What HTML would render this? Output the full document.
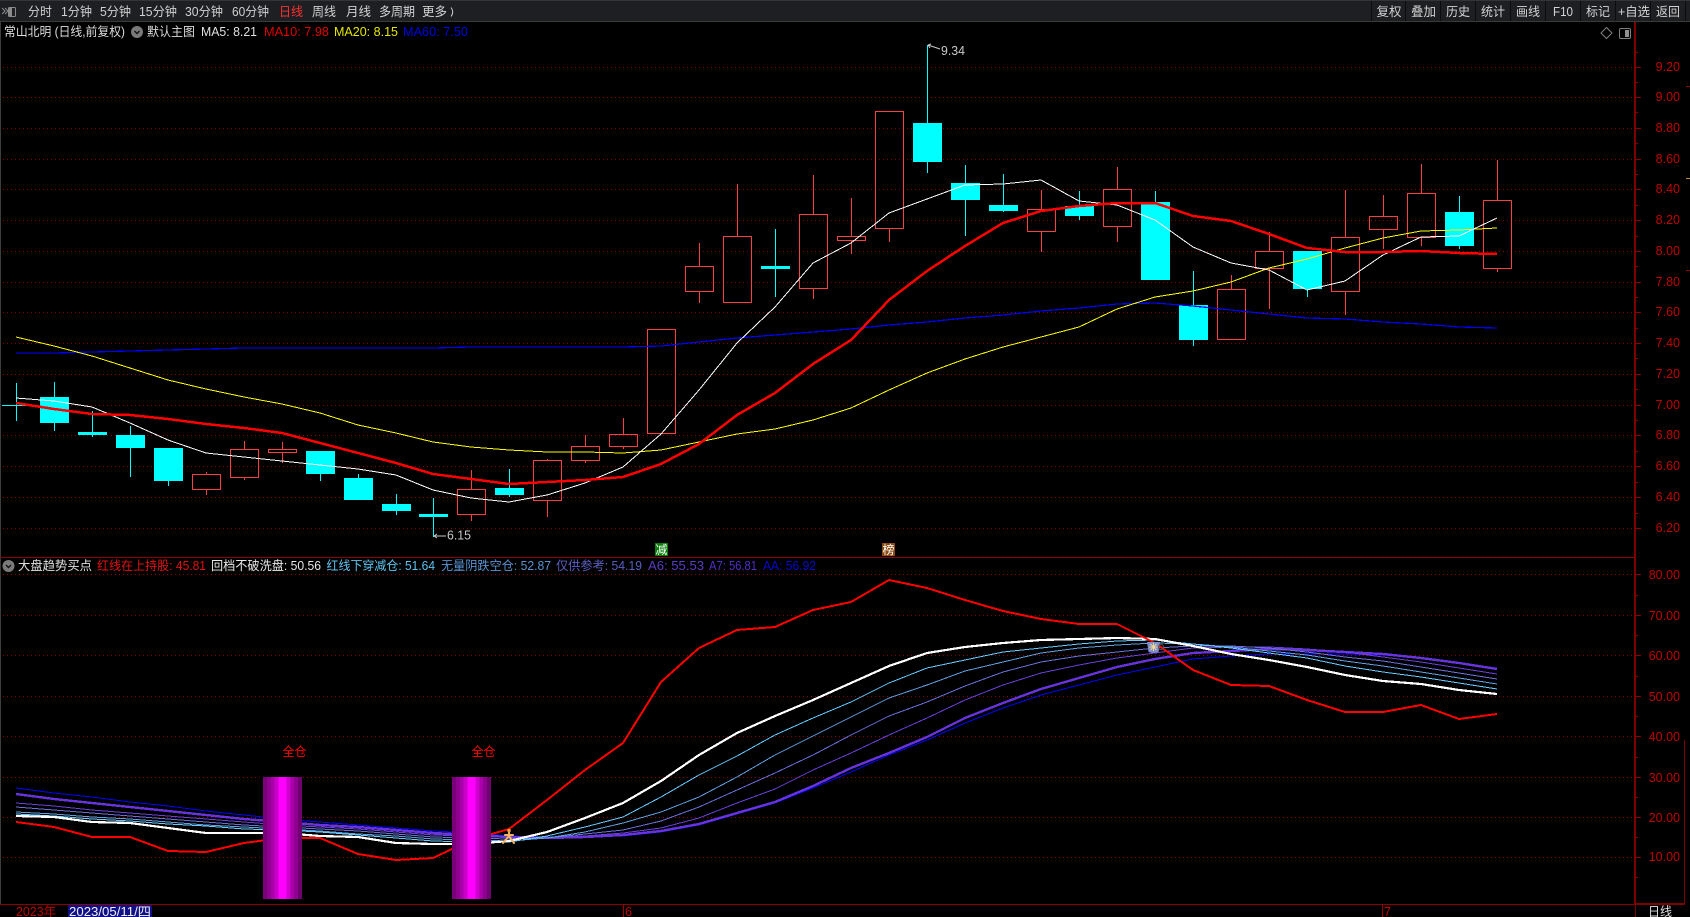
<!DOCTYPE html>
<html lang="zh-CN">
<head>
<meta charset="utf-8">
<title>常山北明</title>
<style>
html,body{margin:0;padding:0;background:#000;width:1690px;height:917px;overflow:hidden}
svg{display:block;position:absolute;left:0;top:0}
text{font-family:"Liberation Sans","Noto Sans CJK SC",sans-serif;font-size:12.5px}
.c{shape-rendering:crispEdges}
.l{fill:none;shape-rendering:crispEdges;stroke-linejoin:round}
.tb{fill:#d2d2d2;font-size:12.5px}
.ax{fill:#c00000;font-size:12.5px;text-anchor:end}
</style>
</head>
<body>
<svg width="1690" height="917" viewBox="0 0 1690 917" xmlns="http://www.w3.org/2000/svg">
<defs>
<linearGradient id="bar" x1="0" x2="1" y1="0" y2="0">
<stop offset="0" stop-color="#7a007a"/><stop offset=".1" stop-color="#7a007a"/>
<stop offset=".1" stop-color="#900090"/><stop offset=".2" stop-color="#900090"/>
<stop offset=".2" stop-color="#aa00aa"/><stop offset=".3" stop-color="#aa00aa"/>
<stop offset=".3" stop-color="#c800c8"/><stop offset=".4" stop-color="#c800c8"/>
<stop offset=".4" stop-color="#ff00ff"/><stop offset=".6" stop-color="#ff00ff"/>
<stop offset=".6" stop-color="#d000d0"/><stop offset=".7" stop-color="#d000d0"/>
<stop offset=".7" stop-color="#aa00aa"/><stop offset=".8" stop-color="#aa00aa"/>
<stop offset=".8" stop-color="#900090"/><stop offset=".9" stop-color="#900090"/>
<stop offset=".9" stop-color="#700070"/><stop offset="1" stop-color="#700070"/>
</linearGradient>
</defs>
<rect width="1690" height="917" fill="#000"/>

<!-- toolbar -->
<rect x="0" y="0" width="1690" height="21" fill="#1e1f23"/>
<rect x="0" y="0" width="1690" height="1" fill="#33343a"/>
<rect x="0" y="21" width="1690" height="1" fill="#3a3a3a"/>
<path class="c" d="M1371.5 1V21M1405.5 1V21M1440.5 1V21M1475.5 1V21M1510.5 1V21M1545.5 1V21M1580.5 1V21M1615.5 1V21M1650.5 1V21M1685.5 1V21" stroke="#0c0c0c" fill="none"/>
<g fill="none" stroke="#8a8a8a" stroke-width="1">
<path d="M2 8l3 3-3 3M5 8l3 3-3 3"/>
<rect x="8.5" y="7.5" width="7" height="9" rx="1"/>
</g>
<rect x="9" y="8" width="3" height="8" fill="#8a8a8a"/>
<text class="tb" x="28" y="16" textLength="24" lengthAdjust="spacingAndGlyphs">分时</text>
<text class="tb" x="61" y="16" textLength="31" lengthAdjust="spacingAndGlyphs">1分钟</text>
<text class="tb" x="100" y="16" textLength="31" lengthAdjust="spacingAndGlyphs">5分钟</text>
<text class="tb" x="139" y="16" textLength="38" lengthAdjust="spacingAndGlyphs">15分钟</text>
<text class="tb" x="185" y="16" textLength="38" lengthAdjust="spacingAndGlyphs">30分钟</text>
<text class="tb" x="232" y="16" textLength="37" lengthAdjust="spacingAndGlyphs">60分钟</text>
<text x="279" y="16" fill="#ff3030" textLength="24" lengthAdjust="spacingAndGlyphs">日线</text>
<text class="tb" x="312" y="16" textLength="24" lengthAdjust="spacingAndGlyphs">周线</text>
<text class="tb" x="346" y="16" textLength="25" lengthAdjust="spacingAndGlyphs">月线</text>
<text class="tb" x="379" y="16" textLength="36" lengthAdjust="spacingAndGlyphs">多周期</text>
<text class="tb" x="422" y="16" textLength="25" lengthAdjust="spacingAndGlyphs">更多</text>
<path d="M451 7.5q3.5 4.5 0 9" fill="none" stroke="#d2d2d2" stroke-width="1"/>

<text class="tb" x="1376.5" y="16" textLength="25" lengthAdjust="spacingAndGlyphs">复权</text>
<text class="tb" x="1411" y="16" textLength="25" lengthAdjust="spacingAndGlyphs">叠加</text>
<text class="tb" x="1446" y="16" textLength="24" lengthAdjust="spacingAndGlyphs">历史</text>
<text class="tb" x="1481" y="16" textLength="24" lengthAdjust="spacingAndGlyphs">统计</text>
<text class="tb" x="1516" y="16" textLength="24" lengthAdjust="spacingAndGlyphs">画线</text>
<text class="tb" x="1553" y="16" textLength="20" lengthAdjust="spacingAndGlyphs">F10</text>
<text class="tb" x="1586" y="16" textLength="24" lengthAdjust="spacingAndGlyphs">标记</text>
<text class="tb" x="1618" y="16" textLength="32" lengthAdjust="spacingAndGlyphs">+自选</text>
<text class="tb" x="1656" y="16" textLength="24" lengthAdjust="spacingAndGlyphs">返回</text>

<!-- title row -->
<text x="4" y="36" fill="#dcdcdc" textLength="121" lengthAdjust="spacingAndGlyphs">常山北明 (日线,前复权)</text>
<circle cx="137" cy="32" r="6" fill="#7a7a7a"/>
<path d="M134.5 31l2.5 2.5 2.5-2.5" fill="none" stroke="#111" stroke-width="1.4"/>
<text x="147" y="36" fill="#dcdcdc" textLength="48" lengthAdjust="spacingAndGlyphs">默认主图</text>
<text x="201" y="36" fill="#e0e0e0" textLength="56" lengthAdjust="spacingAndGlyphs">MA5: 8.21</text>
<text x="264" y="36" fill="#e00000" textLength="65" lengthAdjust="spacingAndGlyphs">MA10: 7.98</text>
<text x="334" y="36" fill="#e6e600" textLength="64" lengthAdjust="spacingAndGlyphs">MA20: 8.15</text>
<text x="403" y="36" fill="#0000e0" textLength="65" lengthAdjust="spacingAndGlyphs">MA60: 7.50</text>
<path d="M1606.5 27.5l5.5 5.5-5.5 5.5-5.5-5.5z" fill="none" stroke="#808080"/>
<rect x="1619.5" y="28.5" width="11" height="10" rx="1.5" fill="none" stroke="#808080"/>
<rect x="1625" y="30" width="4" height="7" fill="#909090"/>

<!-- grid -->
<g stroke="#8a0000" stroke-width="1" stroke-dasharray="1 3" class="c">
<path d="M3 67.5H1635M3 97.5H1635M3 128.5H1635M3 159.5H1635M3 189.5H1635M3 220.5H1635M3 251.5H1635M3 282.5H1635M3 312.5H1635M3 343.5H1635M3 374.5H1635M3 405.5H1635M3 435.5H1635M3 466.5H1635M3 497.5H1635M3 528.5H1635"/>
<path d="M3 574.5H1635M3 615.5H1635M3 655.5H1635M3 696.5H1635M3 736.5H1635M3 777.5H1635M3 817.5H1635M3 857.5H1635"/>
</g>

<!-- frame -->
<rect x="0" y="22" width="1" height="883" fill="#3c3c3c"/>
<rect x="0" y="557" width="1635" height="1" fill="#8b0000"/>
<rect x="0" y="904" width="1685" height="1" fill="#8b0000"/>
<rect x="1634" y="22" width="2" height="883" fill="#800000"/>
<rect x="1635" y="905" width="1" height="12" fill="#800000"/>
<rect x="1635" y="903" width="50" height="2" fill="#800000"/>
<rect x="1684" y="740" width="1" height="165" fill="#800000"/>
<rect x="623" y="905" width="1" height="12" fill="#a00000"/>
<rect x="1382" y="905" width="1" height="12" fill="#a00000"/>
<path class="c" stroke="#8b0000" fill="none" d="M1636 67.5h5M1636 82.5h2M1636 97.5h5M1636 112.5h2M1636 128.5h5M1636 143.5h2M1636 159.5h5M1636 174.5h2M1636 189.5h5M1636 205.5h2M1636 220.5h5M1636 236.5h2M1636 251.5h5M1636 266.5h2M1636 282.5h5M1636 297.5h2M1636 312.5h5M1636 328.5h2M1636 343.5h5M1636 358.5h2M1636 374.5h5M1636 389.5h2M1636 405.5h5M1636 420.5h2M1636 435.5h5M1636 451.5h2M1636 466.5h5M1636 482.5h2M1636 497.5h5M1636 513.5h2M1636 528.5h5M1636 574.5h5M1636 595.5h2M1636 615.5h5M1636 635.5h2M1636 655.5h5M1636 676.5h2M1636 696.5h5M1636 716.5h2M1636 736.5h5M1636 757.5h2M1636 777.5h5M1636 797.5h2M1636 817.5h5M1636 837.5h2M1636 857.5h5M1636 877.5h2M1636 52.5h2M1686 86.5h4M1686 270.5h4"/>
<rect x="1686" y="178" width="4" height="1" fill="#c09040"/>
<g>
<text class="ax" x="1680" y="71">9.20</text><text class="ax" x="1680" y="101">9.00</text>
<text class="ax" x="1680" y="132">8.80</text><text class="ax" x="1680" y="163">8.60</text>
<text class="ax" x="1680" y="193">8.40</text><text class="ax" x="1680" y="224">8.20</text>
<text class="ax" x="1680" y="255">8.00</text><text class="ax" x="1680" y="286">7.80</text>
<text class="ax" x="1680" y="316">7.60</text><text class="ax" x="1680" y="347">7.40</text>
<text class="ax" x="1680" y="378">7.20</text><text class="ax" x="1680" y="409">7.00</text>
<text class="ax" x="1680" y="439">6.80</text><text class="ax" x="1680" y="470">6.60</text>
<text class="ax" x="1680" y="501">6.40</text><text class="ax" x="1680" y="532">6.20</text>
<text class="ax" x="1680" y="579">80.00</text><text class="ax" x="1680" y="620">70.00</text>
<text class="ax" x="1680" y="660">60.00</text><text class="ax" x="1680" y="701">50.00</text>
<text class="ax" x="1680" y="741">40.00</text><text class="ax" x="1680" y="782">30.00</text>
<text class="ax" x="1680" y="822">20.00</text><text class="ax" x="1680" y="861">10.00</text>
</g>

<!-- red candles -->
<path class="c" fill="none" stroke="#f84040" stroke-width="1" d="
M206.5 472V474M206.5 490V495M192.5 474.5H220.5V489.5H192.5Z
M244.5 441V449M244.5 478V480M230.5 449.5H258.5V477.5H230.5Z
M282.5 442V449M282.5 453V463M268.5 449.5H296.5V452.5H268.5Z
M471.5 470V489M471.5 515V521M457.5 489.5H485.5V514.5H457.5Z
M547.5 459V460M547.5 501V517M533.5 460.5H561.5V500.5H533.5Z
M585.5 435V446M585.5 461V463M571.5 446.5H599.5V460.5H571.5Z
M623.5 418V434M623.5 447V449M609.5 434.5H637.5V446.5H609.5Z
M647.5 329.5H675.5V433.5H647.5Z
M699.5 243V266M699.5 292V303M685.5 266.5H713.5V291.5H685.5Z
M737.5 184V236M723.5 236.5H751.5V302.5H723.5Z
M813.5 175V214M813.5 289V299M799.5 214.5H827.5V288.5H799.5Z
M851.5 198V236M851.5 241V254M837.5 236.5H865.5V240.5H837.5Z
M889.5 229V242M875.5 111.5H903.5V228.5H875.5Z
M1041.5 190V209M1041.5 232V252M1027.5 209.5H1055.5V231.5H1027.5Z
M1117.5 167V189M1117.5 227V242M1103.5 189.5H1131.5V226.5H1103.5Z
M1231.5 275V289M1217.5 289.5H1245.5V339.5H1217.5Z
M1269.5 232V251M1269.5 269V309M1255.5 251.5H1283.5V268.5H1255.5Z
M1345.5 190V237M1345.5 292V315M1331.5 237.5H1359.5V291.5H1331.5Z
M1383.5 195V216M1383.5 230V249M1369.5 216.5H1397.5V229.5H1369.5Z
M1421.5 164V193M1421.5 238V246M1407.5 193.5H1435.5V237.5H1407.5Z
M1497.5 160V200M1497.5 269V272M1483.5 200.5H1511.5V268.5H1483.5Z"/>

<!-- cyan candles -->
<path class="c" fill="none" stroke="#00ffff" stroke-width="1" d="M16.5 383V421M2 405.5H29M54.5 382V431M92.5 411V437M130.5 426V477M168.5 448V486M320.5 451V481M358.5 474V500M396.5 494V515M433.5 498V537M509.5 469V497M775.5 229V297M927.5 45V173M965.5 165V236M1003.5 174V212M1079.5 191V220M1155.5 191V280M1193.5 271V346M1307.5 251V297M1459.5 196V249"/>
<path class="c" fill="#00ffff" d="M40 397h29v26h-29zM78 432h29v3h-29zM116 435h29v13h-29zM154 448h29v33h-29zM306 451h29v23h-29zM344 478h29v22h-29zM382 504h29v7h-29zM419 514h29v3h-29zM495 488h29v7h-29zM761 266h29v3h-29zM913 123h29v39h-29zM951 183h29v17h-29zM989 205h29v6h-29zM1065 206h29v10h-29zM1141 202h29v78h-29zM1179 305h29v35h-29zM1293 251h29v38h-29zM1445 212h29v34h-29z"/>

<!-- high / low marks -->
<path d="M928 45l12 4M928 45l3-1M928 45l2 3" fill="none" stroke="#c8c8c8" stroke-width="1"/>
<text x="941" y="55" fill="#c8c8c8" textLength="24" lengthAdjust="spacingAndGlyphs">9.34</text>
<path d="M434 536h12M434 536l3-2M434 536l3 2" fill="none" stroke="#c8c8c8" stroke-width="1"/>
<text x="447" y="539.5" fill="#c8c8c8" textLength="24" lengthAdjust="spacingAndGlyphs">6.15</text>

<!-- MA lines -->
<polyline class="l" stroke="#0000ff" stroke-width="1.2" points="16,353 54,353 92,352 130,351 168,350 206,349 244,348 282,348 320,348 358,348 396,348 433,348 471,347 509,347 547,347 585,347 623,347 661,346 699,342 737,338 775,335 813,332 851,329 889,325 927,322 965,318 1003,315 1041,311 1079,308 1117,304 1155,303 1193,306 1231,310 1269,314 1307,318 1345,319 1383,322 1421,324 1459,327 1497,328"/>
<polyline class="l" stroke="#ffff00" stroke-width="1" points="16,337 54,346 92,356 130,368 168,380 206,389 244,397 282,404 320,413 358,425 396,433 433,442 471,447 509,450 547,452 585,452 623,453 661,450 699,442 737,434 775,429 813,420 851,408 889,390 927,373 965,359 1003,347 1041,337 1079,327 1117,309 1155,297 1193,291 1231,282 1269,268 1307,259 1345,248 1383,238 1421,231 1459,230 1497,228"/>
<polyline class="l" stroke="#ffffff" stroke-width="1" points="16,398 54,401 92,407 130,423 168,440 206,453 244,457 282,461 320,465 358,469 396,475 433,490 471,498 509,502 547,495 585,483 623,467 661,434 699,390 737,343 775,307 813,263 851,243 889,213 927,199 965,185 1003,184 1041,180 1079,201 1117,205 1155,220 1193,247 1231,263 1269,270 1307,290 1345,281 1383,255 1421,237 1459,236 1497,218"/>
<polyline class="l" stroke="#ff0000" stroke-width="2.5" points="16,403 54,409 92,414 130,415 168,419 206,424 244,428 282,433 320,443 358,453 396,463 433,474 471,479 509,484 547,482 585,480 623,477 661,464 699,444 737,415 775,393 813,364 851,340 889,300 927,271 965,246 1003,223 1041,211 1079,206 1117,203 1155,203 1193,216 1231,221 1269,234 1307,248 1345,252 1383,252 1421,251 1459,253 1497,254"/>

<!-- badges -->
<rect x="655" y="543" width="13" height="13" fill="#0a7d0a"/>
<text x="661.5" y="554" fill="#fff" text-anchor="middle" style="font-size:12px">减</text>
<rect x="882" y="543" width="13" height="13" fill="#8b4a10"/>
<text x="888.5" y="554" fill="#fff" text-anchor="middle" style="font-size:12px">榜</text>

<!-- indicator title -->
<circle cx="8.5" cy="566" r="6" fill="#7a7a7a"/>
<path d="M6 565l2.5 2.5 2.5-2.5" fill="none" stroke="#111" stroke-width="1.4"/>
<text x="18" y="570" fill="#e0e0e0" textLength="74" lengthAdjust="spacingAndGlyphs">大盘趋势买点</text>
<text x="97" y="570" fill="#e61010" textLength="109" lengthAdjust="spacingAndGlyphs">红线在上持股: 45.81</text>
<text x="211" y="570" fill="#e8e8e8" textLength="110" lengthAdjust="spacingAndGlyphs">回档不破洗盘: 50.56</text>
<text x="326.5" y="570" fill="#5fc4f0" textLength="108.5" lengthAdjust="spacingAndGlyphs">红线下穿减仓: 51.64</text>
<text x="441" y="570" fill="#5a92d0" textLength="110" lengthAdjust="spacingAndGlyphs">无量阴跌空仓: 52.87</text>
<text x="556" y="570" fill="#5a5fc0" textLength="86" lengthAdjust="spacingAndGlyphs">仅供参考: 54.19</text>
<text x="648" y="570" fill="#5a3cc0" textLength="56" lengthAdjust="spacingAndGlyphs">A6: 55.53</text>
<text x="709" y="570" fill="#5030c8" textLength="48" lengthAdjust="spacingAndGlyphs">A7: 56.81</text>
<text x="763" y="570" fill="#0808d0" textLength="53" lengthAdjust="spacingAndGlyphs">AA: 56.92</text>

<!-- fan lines -->
<polyline class="l" stroke="#0000ff" stroke-width="1" points="16,788 54,793 92,797 130,802 168,806 206,811 244,815 282,819 320,822 358,825 396,828 433,831 471,833 509,836 547,837 585,836 623,836 661,832 699,825 737,814 775,803 813,788 851,772 889,755 927,740 965,723 1003,708 1041,695 1079,685 1117,675 1155,667 1193,659 1231,656 1269,654 1307,654 1345,654 1383,655 1421,658 1459,663 1497,668"/>
<polyline class="l" stroke="#6633dd" stroke-width="2.4" points="16,794 54,799 92,803 130,807 168,811 206,815 244,819 282,822 320,825 358,827 396,830 433,833 471,835 509,837 547,838 585,837 623,835 661,831 699,824 737,813 775,802 813,786 851,768 889,753 927,737 965,718 1003,703 1041,689 1079,678 1117,667 1155,659 1193,653 1231,651 1269,649 1307,650 1345,652 1383,654 1421,658 1459,663 1497,669"/>
<polyline class="l" stroke="#6a3fd8" stroke-width="1" points="16,803 54,806 92,810 130,813 168,816 206,819 244,822 282,825 320,827 358,829 396,832 433,835 471,836 509,837 547,837 585,836 623,833 661,828 699,818 737,803 775,789 813,770 851,753 889,735 927,718 965,700 1003,685 1041,673 1079,665 1117,658 1155,653 1193,648 1231,647 1269,647 1307,649 1345,652 1383,657 1421,662 1459,668 1497,674"/>
<polyline class="l" stroke="#6a70d8" stroke-width="1" points="16,807 54,810 92,813 130,816 168,819 206,822 244,825 282,827 320,829 358,831 396,834 433,837 471,838 509,839 547,838 585,834 623,830 661,821 699,807 737,790 775,773 813,755 851,735 889,716 927,702 965,686 1003,672 1041,662 1079,656 1117,652 1155,648 1193,646 1231,646 1269,648 1307,652 1345,657 1383,661 1421,667 1459,673 1497,679"/>
<polyline class="l" stroke="#5f9fe0" stroke-width="1" points="16,812 54,814 92,817 130,819 168,822 206,825 244,827 282,829 320,831 358,834 396,836 433,839 471,840 509,841 547,838 585,832 623,823 661,812 699,797 737,777 775,755 813,736 851,717 889,698 927,685 965,671 1003,662 1041,653 1079,648 1117,645 1155,643 1193,644 1231,647 1269,651 1307,655 1345,661 1383,666 1421,672 1459,678 1497,684"/>
<polyline class="l" stroke="#66ccff" stroke-width="1" points="16,814 54,816 92,819 130,821 168,824 206,826 244,829 282,830 320,832 358,835 396,838 433,841 471,842 509,842 547,836 585,827 623,817 661,797 699,775 737,756 775,735 813,718 851,702 889,683 927,668 965,660 1003,652 1041,648 1079,644 1117,641 1155,640 1193,644 1231,648 1269,653 1307,658 1345,666 1383,672 1421,677 1459,683 1497,689"/>
<polyline class="l" stroke="#ffffff" stroke-width="2.2" points="16,816 54,817 92,822 130,823 168,828 206,833 244,833 282,833 320,836 358,837 396,843 433,844 471,844 509,841 547,832 585,818 623,803 661,781 699,755 737,733 775,716 813,700 851,683 889,666 927,653 965,647 1003,643 1041,640 1079,639 1117,638 1155,639 1193,646 1231,654 1269,660 1307,667 1345,675 1383,681 1421,684 1459,690 1497,694"/>
<polyline class="l" stroke="#ff0000" stroke-width="2" points="16,822 54,827 92,837 130,837 168,851 206,852 244,843 282,838 320,838 358,854 396,860 433,858 471,840 509,829 547,800 585,770 623,743 661,682 699,648 737,630 775,627 813,610 851,602 889,580 927,588 965,600 1003,611 1041,619 1079,624 1117,624 1155,643 1193,670 1231,685 1269,686 1307,700 1345,712 1383,712 1421,705 1459,719 1497,714"/>

<!-- position bars -->
<rect class="c" x="263" y="777" width="39" height="122" fill="url(#bar)"/>
<rect class="c" x="452" y="777" width="39" height="122" fill="url(#bar)"/>
<text x="282.5" y="756" fill="#ff0000" textLength="24" lengthAdjust="spacingAndGlyphs">全仓</text>
<text x="471.5" y="756" fill="#ff0000" textLength="24" lengthAdjust="spacingAndGlyphs">全仓</text>

<!-- person icon -->
<g fill="none" stroke="#f2b464" stroke-width="2" stroke-linecap="round">
<path d="M509 832v4M509 836l-6 7M509 836l5 7M505 835h8"/>
</g>
<circle cx="509" cy="830.5" r="1.8" fill="#e8a040"/>

<!-- cup icon -->
<path d="M1147 642h13l-1.5 10q-5 2-10 0z" fill="#7f8fcb"/>
<path d="M1153.5 643v8M1149.5 647h8M1150.5 644l6 6M1156.5 644l-6 6" stroke="#f0d890" stroke-width="1"/>
<circle cx="1161" cy="647" r="2.5" fill="none" stroke="#555" stroke-width="1"/>

<!-- bottom strip -->
<text x="16" y="916" fill="#c00000" textLength="40" lengthAdjust="spacingAndGlyphs">2023年</text>
<rect x="68" y="905" width="84" height="12" fill="#101088"/>
<text x="69" y="916" fill="#f0f0f0" textLength="82" lengthAdjust="spacingAndGlyphs">2023/05/11/四</text>
<text x="625" y="916" fill="#c00000">6</text>
<text x="1384" y="916" fill="#c00000">7</text>
<text x="1648" y="916" fill="#e0e0e0" textLength="24" lengthAdjust="spacingAndGlyphs">日线</text>
</svg>
</body>
</html>
